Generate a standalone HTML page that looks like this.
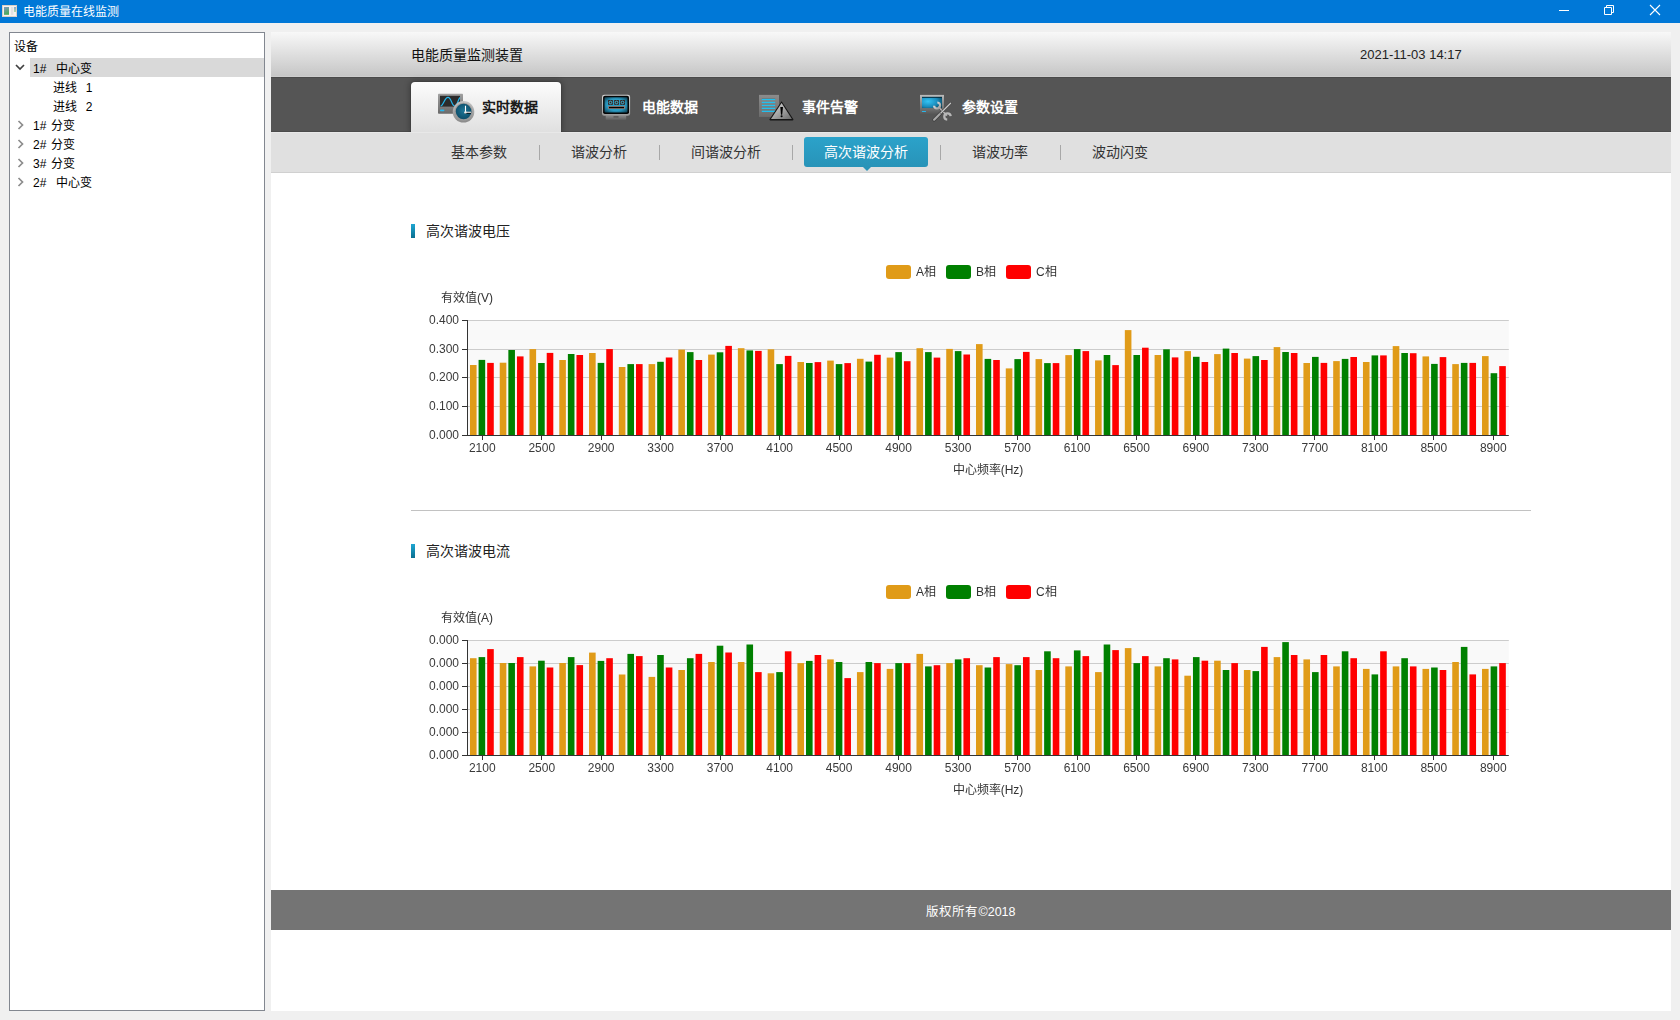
<!DOCTYPE html>
<html lang="zh-CN">
<head>
<meta charset="utf-8">
<title>电能质量在线监测</title>
<style>
*{box-sizing:border-box;margin:0;padding:0}
html,body{width:1680px;height:1020px;overflow:hidden}
body{position:relative;background:#f0f0f0;font-family:"Liberation Sans",sans-serif;color:#000}
.abs{position:absolute}
#titlebar{left:0;top:0;width:1680px;height:23px;background:#0078d7;color:#fff}
#titlebar .t{position:absolute;left:23px;top:4px;font-size:12px;line-height:16px;white-space:nowrap}
#tree{left:9px;top:32px;width:256px;height:979px;background:#fff;border:1px solid #828790}
#tree .row{position:absolute;left:0;height:19px;font-size:12px;line-height:19px;white-space:pre}
#content{left:271px;top:32px;width:1400px;height:979px;background:#fff}
#header{left:0;top:0;width:1400px;height:45px;background:linear-gradient(#f8f8f8 0,#c6c6c6 44px,#cdcdcd 44px)}
#nav{left:0;top:45px;width:1400px;height:55px;background:#555;box-shadow:inset 0 1px 0 #4a4a4a,inset 0 -1px 0 #4b4b4b}
#subnav{left:0;top:100px;width:1400px;height:41px;background:#e0e0e0;box-shadow:inset 0 1px 0 #e8e8e8,inset 0 -1px 0 #d0d0d0}
.mtab{position:absolute;top:0;width:150px;height:55px}
.mtab .txt{position:absolute;left:71px;top:20px;font-size:14px;font-weight:bold;line-height:20px;color:#fff;white-space:nowrap}
.mtab.active{top:5px;height:50px;background:linear-gradient(#fcfcfc,#e0e0e0);border-radius:4px 4px 0 0;box-shadow:0 0 1px rgba(0,0,0,.6),0 0 6px 1px rgba(0,0,0,.32)}
.mtab.active .txt{color:#1a1a1a;top:15px}
.mtab svg{position:absolute}
.stab{position:absolute;top:5px;height:30px;font-size:14px;line-height:30px;color:#333;white-space:nowrap;text-align:center}
.stab.active{background:linear-gradient(#2ba2ca,#2893b8);color:#fff;border-radius:3px}
.stab.active:after{content:"";position:absolute;left:50%;margin-left:-4px;bottom:-4px;border-left:5px solid transparent;border-right:5px solid transparent;border-top:5px solid #2893b8}
.sep{position:absolute;top:13px;width:1px;height:15px;background:#a8a8a8}
.sect{position:absolute;font-size:14px;line-height:16px;color:#222;white-space:nowrap}
.bar4{position:absolute;width:4px;height:14px;background:linear-gradient(#1ea6d2,#0b6f90)}
#footer{left:0;top:858px;width:1400px;height:40px;background:#747474;color:#fff;font-size:12.5px;line-height:44px;text-align:center}
svg text{font-family:"Liberation Sans",sans-serif}
.chart{will-change:transform}
</style>
</head>
<body>
<div id="titlebar" class="abs">
  <svg class="abs" style="left:2px;top:5px" width="15" height="12" viewBox="0 0 15 12">
    <defs><linearGradient id="ig" x1="0" y1="0" x2="0.3" y2="1"><stop offset="0" stop-color="#7f98c4"/><stop offset="1" stop-color="#4aaa5a"/></linearGradient>
    <linearGradient id="ig2" x1="0" y1="0" x2="0" y2="1"><stop offset="0" stop-color="#8aa6d0"/><stop offset="1" stop-color="#b0dca8"/></linearGradient></defs>
    <rect x="0" y="0" width="15" height="12" fill="#f4f2f0"/>
    <rect x="0.5" y="0.5" width="14" height="11" fill="none" stroke="#d6c8bc" stroke-width="0.8"/>
    <rect x="2" y="2" width="5" height="7.8" fill="url(#ig)"/>
    <rect x="9" y="2" width="2.3" height="7.8" fill="#e2e2e2"/>
    <rect x="12" y="2" width="2" height="5" fill="url(#ig2)"/>
  </svg>
  <div class="t">电能质量在线监测</div>
  <svg class="abs" style="left:1559px;top:10px" width="11" height="1"><rect width="10" height="1" fill="#fff"/></svg>
  <svg class="abs" style="left:1604px;top:5px" width="11" height="11" viewBox="0 0 11 11">
    <path d="M0.5 2.5h7v7h-7z M2.5 2.5v-2h7v7h-2" fill="none" stroke="#fff" stroke-width="1"/>
  </svg>
  <svg class="abs" style="left:1649px;top:4px" width="12" height="12" viewBox="0 0 12 12">
    <path d="M1 1L11 11M11 1L1 11" stroke="#fff" stroke-width="1.1"/>
  </svg>
</div>

<div id="tree" class="abs">
  <div class="row" style="top:5px;left:4px">设备</div>
  <div class="abs" style="left:20px;top:25px;width:234px;height:19px;background:#d9d9d9"></div>
  <svg class="abs" style="left:5px;top:31px" width="10" height="7" viewBox="0 0 10 7"><path d="M1 1L5 5L9 1" fill="none" stroke="#404040" stroke-width="1.7"/></svg>
  <div class="row" style="top:27px;left:23px">1#<span style="margin-left:9.7px">中心变</span></div>
  <div class="row" style="top:46px;left:43px">进线<span style="margin-left:8.7px">1</span></div>
  <div class="row" style="top:65px;left:43px">进线<span style="margin-left:8.7px">2</span></div>
  <svg class="abs" style="left:6.5px;top:86.5px" width="7" height="10" viewBox="0 0 6 10"><path d="M1 1L5 5L1 9" fill="none" stroke="#8c8c8c" stroke-width="1.7"/></svg>
  <div class="row" style="top:84px;left:23px">1#<span style="margin-left:5px">分变</span></div>
  <svg class="abs" style="left:6.5px;top:105.5px" width="7" height="10" viewBox="0 0 6 10"><path d="M1 1L5 5L1 9" fill="none" stroke="#8c8c8c" stroke-width="1.7"/></svg>
  <div class="row" style="top:103px;left:23px">2#<span style="margin-left:5px">分变</span></div>
  <svg class="abs" style="left:6.5px;top:124.5px" width="7" height="10" viewBox="0 0 6 10"><path d="M1 1L5 5L1 9" fill="none" stroke="#8c8c8c" stroke-width="1.7"/></svg>
  <div class="row" style="top:122px;left:23px">3#<span style="margin-left:5px">分变</span></div>
  <svg class="abs" style="left:6.5px;top:143.5px" width="7" height="10" viewBox="0 0 6 10"><path d="M1 1L5 5L1 9" fill="none" stroke="#8c8c8c" stroke-width="1.7"/></svg>
  <div class="row" style="top:141px;left:23px">2#<span style="margin-left:9.7px">中心变</span></div>
</div>

<div id="content" class="abs">
  <div id="header" class="abs">
    <div class="abs" style="left:140px;top:14px;font-size:14px;line-height:18px;color:#111;white-space:nowrap">电能质量监测装置</div>
    <div class="abs" style="left:1089px;top:15px;font-size:13px;line-height:16px;color:#222;white-space:nowrap">2021-11-03 14:17</div>
  </div>
  <div id="nav" class="abs">
    <!-- tabs -->
    <div class="mtab active" style="left:140px">
      <svg style="left:25px;top:10px" width="40" height="32" viewBox="0 0 40 32">
<defs>
<linearGradient id="m1" x1="0" y1="0" x2="0" y2="1"><stop offset="0" stop-color="#a0a0a0"/><stop offset="1" stop-color="#6a6a6a"/></linearGradient>
<radialGradient id="c1" cx="0.5" cy="0.45" r="0.6"><stop offset="0" stop-color="#1f7798"/><stop offset="1" stop-color="#0b4a66"/></radialGradient>
<linearGradient id="r1" x1="0" y1="0" x2="0" y2="1"><stop offset="0" stop-color="#c4c4c4"/><stop offset="1" stop-color="#8a8a8a"/></linearGradient>
</defs>
<rect x="2" y="1.8" width="25" height="20" rx="0.8" fill="url(#m1)"/>
<rect x="4" y="3.8" width="20" height="10.8" fill="#2b2b2b"/>
<path d="M4.6 14 C7.5 13.5 8.5 5.3 12 5.3 C15.5 5.3 15.5 14 18.8 14 C21.5 14 22 7 24 5.5" fill="none" stroke="#25b8ee" stroke-width="1.2"/>
<rect x="4" y="17.6" width="4.4" height="1.6" rx="0.8" fill="#29b6ea"/>
<circle cx="27.5" cy="19.8" r="10.8" fill="url(#r1)"/>
<circle cx="27.5" cy="19.8" r="9" fill="#9a9a9a"/>
<circle cx="27.6" cy="19.5" r="7.8" fill="url(#c1)"/>
<rect x="28.8" y="20" width="6.2" height="1.6" fill="#000"/>
<path d="M29.5 13.8V20.3H35" fill="none" stroke="#fff" stroke-width="1.1"/>
<circle cx="29.4" cy="20.4" r="1.2" fill="#eee"/>
</svg>
      <div class="txt">实时数据</div>
    </div>
    <div class="mtab" style="left:300px">
      <svg style="left:29px;top:15px" width="40" height="32" viewBox="0 0 40 32">
<defs>
<linearGradient id="m2" x1="0" y1="0" x2="0" y2="1"><stop offset="0" stop-color="#d4d4d4"/><stop offset="1" stop-color="#9a9a9a"/></linearGradient>
<linearGradient id="st2" x1="0" y1="0" x2="0" y2="1"><stop offset="0" stop-color="#8a8a8a"/><stop offset="1" stop-color="#5c5c5c"/></linearGradient>
<radialGradient id="s2" cx="0.5" cy="0.5" r="0.7"><stop offset="0.55" stop-color="#2a9cc4"/><stop offset="1" stop-color="#0c3a4c"/></radialGradient>
</defs>
<path d="M5.7 23.5 H26.2 V27 Q26.2 28 25.2 28 H6.7 Q5.7 28 5.7 27 Z" fill="url(#st2)"/>
<rect x="13.5" y="24.2" width="5" height="1.4" fill="#555"/>
<rect x="2" y="2.7" width="28.1" height="21" rx="2.2" fill="url(#m2)"/>
<rect x="3.1" y="3.8" width="25.9" height="18.3" rx="1.8" fill="#050505"/>
<rect x="4.5" y="5.3" width="23" height="15.1" rx="0.8" fill="url(#s2)"/>
<rect x="8.1" y="8.1" width="4.7" height="4.7" fill="#3a1e18"/>
<rect x="14.2" y="8.1" width="4.7" height="4.7" fill="#3a1e18"/>
<rect x="20.2" y="8.1" width="4.7" height="4.7" fill="#3a1e18"/>
<circle cx="10.45" cy="10.45" r="1.3" fill="none" stroke="#3cc8f0" stroke-width="0.9"/>
<circle cx="16.55" cy="10.45" r="1.3" fill="none" stroke="#3cc8f0" stroke-width="0.9"/>
<circle cx="22.55" cy="10.45" r="1.3" fill="none" stroke="#3cc8f0" stroke-width="0.9"/>
<rect x="8.1" y="14" width="16.8" height="3" fill="#8a7a76"/>
<rect x="9" y="14.9" width="15" height="1.3" fill="#000"/>
</svg>
      <div class="txt">电能数据</div>
    </div>
    <div class="mtab" style="left:460px">
      <svg style="left:25px;top:15px" width="40" height="32" viewBox="0 0 40 32">
<defs>
<linearGradient id="d3" x1="0" y1="0" x2="0" y2="1"><stop offset="0" stop-color="#8c8c8c"/><stop offset="1" stop-color="#6c6c6c"/></linearGradient>
<linearGradient id="t3" x1="0" y1="0" x2="1" y2="1"><stop offset="0" stop-color="#e0e0e0"/><stop offset="1" stop-color="#6a6a6a"/></linearGradient>
</defs>
<rect x="3" y="2.9" width="20" height="22" fill="url(#d3)"/>
<rect x="5.8" y="6.3" width="13.4" height="1" fill="#7a675e"/>
<rect x="5.8" y="6.8" width="13.4" height="1.3" fill="#20c0f0"/>
<rect x="5.8" y="9.8" width="13.4" height="1.3" fill="#20c0f0"/>
<rect x="5.8" y="12.8" width="13.4" height="1.3" fill="#20c0f0"/>
<rect x="5.8" y="15.7" width="13.4" height="1.3" fill="#20c0f0"/>
<rect x="5.8" y="18.7" width="13.4" height="1.3" fill="#20c0f0"/>
<path d="M25.6 9.2 L37.4 27.3 Q37.8 28.4 36.6 28.4 L14.4 28.4 Q13 28.4 13.5 27.3 Z" fill="#151515"/>
<path d="M25.6 11 L35.9 27.1 L15 27.1 Z" fill="url(#t3)"/>
<path d="M24.3 15 H27 L26.2 22.8 H25 Z" fill="#000"/>
<circle cx="25.6" cy="24.2" r="1.05" fill="#000"/>
</svg>
      <div class="txt">事件告警</div>
    </div>
    <div class="mtab" style="left:620px">
      <svg style="left:26px;top:15px" width="40" height="32" viewBox="0 0 40 32">
<defs>
<linearGradient id="m4" x1="0" y1="0" x2="0" y2="1"><stop offset="0" stop-color="#bcbcbc"/><stop offset="0.3" stop-color="#9a9a9a"/><stop offset="1" stop-color="#565656"/></linearGradient>
<radialGradient id="s4" cx="0.3" cy="0.4" r="0.8"><stop offset="0" stop-color="#34c4f4"/><stop offset="0.6" stop-color="#1a8cbc"/><stop offset="1" stop-color="#08465e"/></radialGradient>
<linearGradient id="k4" x1="0" y1="0" x2="1" y2="1"><stop offset="0" stop-color="#eeeeee"/><stop offset="1" stop-color="#9a9a9a"/></linearGradient>
</defs>
<rect x="3" y="2.9" width="24" height="19.2" fill="url(#m4)"/>
<rect x="5" y="4.9" width="20" height="11.2" fill="url(#s4)"/>
<rect x="5" y="4.9" width="20" height="0.9" fill="#062a3a"/>
<rect x="4.8" y="18.9" width="4.3" height="1.2" rx="0.6" fill="#29b6ea"/>
<path d="M21.2 14.8 L30 23.6" stroke="#444" stroke-width="2.6"/>
<path d="M21.2 14.8 L30 23.6" stroke="#b4b4b4" stroke-width="1.6"/>
<path d="M20.36 10.51 A3 3 0 1 1 17.11 13.76" fill="none" stroke="url(#k4)" stroke-width="2.2"/>
<path d="M30.22 27.69 A3.2 3.2 0 1 1 33.69 24.22" fill="none" stroke="#b8b8b8" stroke-width="2.3"/>
<path d="M17.1 27.7 L23.8 21" stroke="#3a3a3a" stroke-width="3.4" stroke-linecap="round"/>
<path d="M17.1 27.7 L23.8 21" stroke="#a8a8a8" stroke-width="2.2" stroke-linecap="round"/>
<path d="M23.8 21 L33.6 11.2" stroke="#3a3a3a" stroke-width="2.2" stroke-linecap="round"/>
<path d="M23.8 21 L33.6 11.2" stroke="#c8c8c8" stroke-width="1.3" stroke-linecap="round"/>
</svg>
      <div class="txt">参数设置</div>
    </div>
  </div>
  <div id="subnav" class="abs">
    <div class="stab" style="left:160px;width:96px">基本参数</div>
    <div class="sep" style="left:268px"></div>
    <div class="stab" style="left:280px;width:96px">谐波分析</div>
    <div class="sep" style="left:388px"></div>
    <div class="stab" style="left:400px;width:110px">间谐波分析</div>
    <div class="sep" style="left:521px"></div>
    <div class="stab active" style="left:533px;width:124px">高次谐波分析</div>
    <div class="sep" style="left:669px"></div>
    <div class="stab" style="left:681px;width:96px">谐波功率</div>
    <div class="sep" style="left:789px"></div>
    <div class="stab" style="left:801px;width:96px">波动闪变</div>
  </div>
  <div id="footer" class="abs">版权所有©2018</div>
</div>

<!-- section 1 -->
<div class="bar4" style="left:411px;top:224px"></div>
<div class="sect" style="left:426px;top:223px">高次谐波电压</div>
<svg class="abs chart" style="left:411px;top:250px" width="1120" height="240" viewBox="411 250 1120 240">
<rect x="467.5" y="320" width="1041.3" height="115" fill="#f9f9f9"/>
<line x1="467.5" x2="1508.8" y1="320.5" y2="320.5" stroke="#ccc" stroke-width="1"/>
<line x1="467.5" x2="1508.8" y1="349.5" y2="349.5" stroke="#ccc" stroke-width="1"/>
<line x1="467.5" x2="1508.8" y1="377.5" y2="377.5" stroke="#ccc" stroke-width="1"/>
<line x1="467.5" x2="1508.8" y1="406.5" y2="406.5" stroke="#ccc" stroke-width="1"/>
<rect x="469.98" y="365.00" width="6.6" height="70.50" fill="#e09b18"/>
<rect x="478.58" y="359.90" width="6.6" height="75.60" fill="#008000"/>
<rect x="487.18" y="362.90" width="6.6" height="72.60" fill="#ff0000"/>
<rect x="499.75" y="362.70" width="6.6" height="72.80" fill="#e09b18"/>
<rect x="508.35" y="350.00" width="6.6" height="85.50" fill="#008000"/>
<rect x="516.95" y="356.40" width="6.6" height="79.10" fill="#ff0000"/>
<rect x="529.51" y="349.10" width="6.6" height="86.40" fill="#e09b18"/>
<rect x="538.11" y="363.00" width="6.6" height="72.50" fill="#008000"/>
<rect x="546.71" y="352.90" width="6.6" height="82.60" fill="#ff0000"/>
<rect x="559.28" y="360.00" width="6.6" height="75.50" fill="#e09b18"/>
<rect x="567.88" y="354.00" width="6.6" height="81.50" fill="#008000"/>
<rect x="576.48" y="355.00" width="6.6" height="80.50" fill="#ff0000"/>
<rect x="589.05" y="353.00" width="6.6" height="82.50" fill="#e09b18"/>
<rect x="597.65" y="362.90" width="6.6" height="72.60" fill="#008000"/>
<rect x="606.25" y="349.10" width="6.6" height="86.40" fill="#ff0000"/>
<rect x="618.81" y="367.00" width="6.6" height="68.50" fill="#e09b18"/>
<rect x="627.41" y="364.10" width="6.6" height="71.40" fill="#008000"/>
<rect x="636.01" y="364.10" width="6.6" height="71.40" fill="#ff0000"/>
<rect x="648.58" y="364.10" width="6.6" height="71.40" fill="#e09b18"/>
<rect x="657.18" y="361.80" width="6.6" height="73.70" fill="#008000"/>
<rect x="665.78" y="357.50" width="6.6" height="78.00" fill="#ff0000"/>
<rect x="678.34" y="349.60" width="6.6" height="85.90" fill="#e09b18"/>
<rect x="686.94" y="352.10" width="6.6" height="83.40" fill="#008000"/>
<rect x="695.54" y="360.00" width="6.6" height="75.50" fill="#ff0000"/>
<rect x="708.11" y="354.60" width="6.6" height="80.90" fill="#e09b18"/>
<rect x="716.71" y="352.30" width="6.6" height="83.20" fill="#008000"/>
<rect x="725.31" y="345.90" width="6.6" height="89.60" fill="#ff0000"/>
<rect x="737.87" y="348.20" width="6.6" height="87.30" fill="#e09b18"/>
<rect x="746.47" y="350.40" width="6.6" height="85.10" fill="#008000"/>
<rect x="755.07" y="350.90" width="6.6" height="84.60" fill="#ff0000"/>
<rect x="767.64" y="349.30" width="6.6" height="86.20" fill="#e09b18"/>
<rect x="776.24" y="364.10" width="6.6" height="71.40" fill="#008000"/>
<rect x="784.84" y="355.90" width="6.6" height="79.60" fill="#ff0000"/>
<rect x="797.41" y="362.00" width="6.6" height="73.50" fill="#e09b18"/>
<rect x="806.01" y="363.00" width="6.6" height="72.50" fill="#008000"/>
<rect x="814.61" y="362.10" width="6.6" height="73.40" fill="#ff0000"/>
<rect x="827.17" y="360.60" width="6.6" height="74.90" fill="#e09b18"/>
<rect x="835.77" y="364.10" width="6.6" height="71.40" fill="#008000"/>
<rect x="844.37" y="363.10" width="6.6" height="72.40" fill="#ff0000"/>
<rect x="856.94" y="358.80" width="6.6" height="76.70" fill="#e09b18"/>
<rect x="865.54" y="361.60" width="6.6" height="73.90" fill="#008000"/>
<rect x="874.14" y="354.80" width="6.6" height="80.70" fill="#ff0000"/>
<rect x="886.70" y="357.60" width="6.6" height="77.90" fill="#e09b18"/>
<rect x="895.30" y="352.10" width="6.6" height="83.40" fill="#008000"/>
<rect x="903.90" y="361.20" width="6.6" height="74.30" fill="#ff0000"/>
<rect x="916.47" y="348.20" width="6.6" height="87.30" fill="#e09b18"/>
<rect x="925.07" y="352.10" width="6.6" height="83.40" fill="#008000"/>
<rect x="933.67" y="357.60" width="6.6" height="77.90" fill="#ff0000"/>
<rect x="946.23" y="348.90" width="6.6" height="86.60" fill="#e09b18"/>
<rect x="954.83" y="351.10" width="6.6" height="84.40" fill="#008000"/>
<rect x="963.43" y="354.50" width="6.6" height="81.00" fill="#ff0000"/>
<rect x="976.00" y="344.10" width="6.6" height="91.40" fill="#e09b18"/>
<rect x="984.60" y="358.90" width="6.6" height="76.60" fill="#008000"/>
<rect x="993.20" y="360.00" width="6.6" height="75.50" fill="#ff0000"/>
<rect x="1005.77" y="368.40" width="6.6" height="67.10" fill="#e09b18"/>
<rect x="1014.37" y="359.10" width="6.6" height="76.40" fill="#008000"/>
<rect x="1022.97" y="351.90" width="6.6" height="83.60" fill="#ff0000"/>
<rect x="1035.53" y="359.10" width="6.6" height="76.40" fill="#e09b18"/>
<rect x="1044.13" y="363.10" width="6.6" height="72.40" fill="#008000"/>
<rect x="1052.73" y="363.10" width="6.6" height="72.40" fill="#ff0000"/>
<rect x="1065.30" y="355.10" width="6.6" height="80.40" fill="#e09b18"/>
<rect x="1073.90" y="349.10" width="6.6" height="86.40" fill="#008000"/>
<rect x="1082.50" y="351.10" width="6.6" height="84.40" fill="#ff0000"/>
<rect x="1095.06" y="360.40" width="6.6" height="75.10" fill="#e09b18"/>
<rect x="1103.66" y="355.00" width="6.6" height="80.50" fill="#008000"/>
<rect x="1112.26" y="365.10" width="6.6" height="70.40" fill="#ff0000"/>
<rect x="1124.83" y="330.10" width="6.6" height="105.40" fill="#e09b18"/>
<rect x="1133.43" y="355.00" width="6.6" height="80.50" fill="#008000"/>
<rect x="1142.03" y="347.70" width="6.6" height="87.80" fill="#ff0000"/>
<rect x="1154.59" y="355.00" width="6.6" height="80.50" fill="#e09b18"/>
<rect x="1163.19" y="349.30" width="6.6" height="86.20" fill="#008000"/>
<rect x="1171.79" y="357.40" width="6.6" height="78.10" fill="#ff0000"/>
<rect x="1184.36" y="351.10" width="6.6" height="84.40" fill="#e09b18"/>
<rect x="1192.96" y="356.80" width="6.6" height="78.70" fill="#008000"/>
<rect x="1201.56" y="362.00" width="6.6" height="73.50" fill="#ff0000"/>
<rect x="1214.13" y="354.10" width="6.6" height="81.40" fill="#e09b18"/>
<rect x="1222.73" y="348.60" width="6.6" height="86.90" fill="#008000"/>
<rect x="1231.33" y="353.00" width="6.6" height="82.50" fill="#ff0000"/>
<rect x="1243.89" y="358.60" width="6.6" height="76.90" fill="#e09b18"/>
<rect x="1252.49" y="356.10" width="6.6" height="79.40" fill="#008000"/>
<rect x="1261.09" y="360.00" width="6.6" height="75.50" fill="#ff0000"/>
<rect x="1273.66" y="347.10" width="6.6" height="88.40" fill="#e09b18"/>
<rect x="1282.26" y="352.00" width="6.6" height="83.50" fill="#008000"/>
<rect x="1290.86" y="353.00" width="6.6" height="82.50" fill="#ff0000"/>
<rect x="1303.42" y="363.00" width="6.6" height="72.50" fill="#e09b18"/>
<rect x="1312.02" y="356.90" width="6.6" height="78.60" fill="#008000"/>
<rect x="1320.62" y="362.90" width="6.6" height="72.60" fill="#ff0000"/>
<rect x="1333.19" y="361.10" width="6.6" height="74.40" fill="#e09b18"/>
<rect x="1341.79" y="358.90" width="6.6" height="76.60" fill="#008000"/>
<rect x="1350.39" y="357.00" width="6.6" height="78.50" fill="#ff0000"/>
<rect x="1362.95" y="362.00" width="6.6" height="73.50" fill="#e09b18"/>
<rect x="1371.55" y="355.40" width="6.6" height="80.10" fill="#008000"/>
<rect x="1380.15" y="355.40" width="6.6" height="80.10" fill="#ff0000"/>
<rect x="1392.72" y="346.10" width="6.6" height="89.40" fill="#e09b18"/>
<rect x="1401.32" y="353.00" width="6.6" height="82.50" fill="#008000"/>
<rect x="1409.92" y="353.20" width="6.6" height="82.30" fill="#ff0000"/>
<rect x="1422.49" y="356.40" width="6.6" height="79.10" fill="#e09b18"/>
<rect x="1431.09" y="363.90" width="6.6" height="71.60" fill="#008000"/>
<rect x="1439.69" y="357.10" width="6.6" height="78.40" fill="#ff0000"/>
<rect x="1452.25" y="364.10" width="6.6" height="71.40" fill="#e09b18"/>
<rect x="1460.85" y="362.90" width="6.6" height="72.60" fill="#008000"/>
<rect x="1469.45" y="362.90" width="6.6" height="72.60" fill="#ff0000"/>
<rect x="1482.02" y="356.10" width="6.6" height="79.40" fill="#e09b18"/>
<rect x="1490.62" y="373.20" width="6.6" height="62.30" fill="#008000"/>
<rect x="1499.22" y="366.10" width="6.6" height="69.40" fill="#ff0000"/>
<line x1="467.5" x2="467.5" y1="320" y2="436" stroke="#333" stroke-width="1"/>
<line x1="462" x2="1508.8" y1="435.5" y2="435.5" stroke="#333" stroke-width="1"/>
<line x1="462" x2="467" y1="320.5" y2="320.5" stroke="#333" stroke-width="1"/>
<text x="459" y="323.7" text-anchor="end" font-size="12" fill="#3a3a3a">0.400</text>
<line x1="462" x2="467" y1="349.5" y2="349.5" stroke="#333" stroke-width="1"/>
<text x="459" y="352.7" text-anchor="end" font-size="12" fill="#3a3a3a">0.300</text>
<line x1="462" x2="467" y1="377.5" y2="377.5" stroke="#333" stroke-width="1"/>
<text x="459" y="380.7" text-anchor="end" font-size="12" fill="#3a3a3a">0.200</text>
<line x1="462" x2="467" y1="406.5" y2="406.5" stroke="#333" stroke-width="1"/>
<text x="459" y="409.7" text-anchor="end" font-size="12" fill="#3a3a3a">0.100</text>
<line x1="462" x2="467" y1="435.5" y2="435.5" stroke="#333" stroke-width="1"/>
<text x="459" y="438.7" text-anchor="end" font-size="12" fill="#3a3a3a">0.000</text>
<line x1="482.5" x2="482.5" y1="436" y2="440" stroke="#333" stroke-width="1"/>
<text x="482.3" y="452" text-anchor="middle" font-size="12" fill="#3a3a3a">2100</text>
<line x1="541.5" x2="541.5" y1="436" y2="440" stroke="#333" stroke-width="1"/>
<text x="541.8" y="452" text-anchor="middle" font-size="12" fill="#3a3a3a">2500</text>
<line x1="601.5" x2="601.5" y1="436" y2="440" stroke="#333" stroke-width="1"/>
<text x="601.2" y="452" text-anchor="middle" font-size="12" fill="#3a3a3a">2900</text>
<line x1="660.5" x2="660.5" y1="436" y2="440" stroke="#333" stroke-width="1"/>
<text x="660.7" y="452" text-anchor="middle" font-size="12" fill="#3a3a3a">3300</text>
<line x1="720.5" x2="720.5" y1="436" y2="440" stroke="#333" stroke-width="1"/>
<text x="720.2" y="452" text-anchor="middle" font-size="12" fill="#3a3a3a">3700</text>
<line x1="779.5" x2="779.5" y1="436" y2="440" stroke="#333" stroke-width="1"/>
<text x="779.7" y="452" text-anchor="middle" font-size="12" fill="#3a3a3a">4100</text>
<line x1="839.5" x2="839.5" y1="436" y2="440" stroke="#333" stroke-width="1"/>
<text x="839.1" y="452" text-anchor="middle" font-size="12" fill="#3a3a3a">4500</text>
<line x1="898.5" x2="898.5" y1="436" y2="440" stroke="#333" stroke-width="1"/>
<text x="898.6" y="452" text-anchor="middle" font-size="12" fill="#3a3a3a">4900</text>
<line x1="958.5" x2="958.5" y1="436" y2="440" stroke="#333" stroke-width="1"/>
<text x="958.1" y="452" text-anchor="middle" font-size="12" fill="#3a3a3a">5300</text>
<line x1="1017.5" x2="1017.5" y1="436" y2="440" stroke="#333" stroke-width="1"/>
<text x="1017.5" y="452" text-anchor="middle" font-size="12" fill="#3a3a3a">5700</text>
<line x1="1077.5" x2="1077.5" y1="436" y2="440" stroke="#333" stroke-width="1"/>
<text x="1077.0" y="452" text-anchor="middle" font-size="12" fill="#3a3a3a">6100</text>
<line x1="1136.5" x2="1136.5" y1="436" y2="440" stroke="#333" stroke-width="1"/>
<text x="1136.5" y="452" text-anchor="middle" font-size="12" fill="#3a3a3a">6500</text>
<line x1="1195.5" x2="1195.5" y1="436" y2="440" stroke="#333" stroke-width="1"/>
<text x="1195.9" y="452" text-anchor="middle" font-size="12" fill="#3a3a3a">6900</text>
<line x1="1255.5" x2="1255.5" y1="436" y2="440" stroke="#333" stroke-width="1"/>
<text x="1255.4" y="452" text-anchor="middle" font-size="12" fill="#3a3a3a">7300</text>
<line x1="1314.5" x2="1314.5" y1="436" y2="440" stroke="#333" stroke-width="1"/>
<text x="1314.9" y="452" text-anchor="middle" font-size="12" fill="#3a3a3a">7700</text>
<line x1="1374.5" x2="1374.5" y1="436" y2="440" stroke="#333" stroke-width="1"/>
<text x="1374.3" y="452" text-anchor="middle" font-size="12" fill="#3a3a3a">8100</text>
<line x1="1433.5" x2="1433.5" y1="436" y2="440" stroke="#333" stroke-width="1"/>
<text x="1433.8" y="452" text-anchor="middle" font-size="12" fill="#3a3a3a">8500</text>
<line x1="1493.5" x2="1493.5" y1="436" y2="440" stroke="#333" stroke-width="1"/>
<text x="1493.3" y="452" text-anchor="middle" font-size="12" fill="#3a3a3a">8900</text>
<text x="467" y="302" text-anchor="middle" font-size="12" fill="#333">有效值(V)</text>
<text x="988" y="474" text-anchor="middle" font-size="12" fill="#333">中心频率(Hz)</text>
<rect x="886" y="265" width="25" height="14" rx="3" fill="#e09b18"/>
<text x="916" y="276" font-size="12" fill="#333">A相</text>
<rect x="946" y="265" width="25" height="14" rx="3" fill="#008000"/>
<text x="976" y="276" font-size="12" fill="#333">B相</text>
<rect x="1006" y="265" width="25" height="14" rx="3" fill="#ff0000"/>
<text x="1036" y="276" font-size="12" fill="#333">C相</text>
</svg>
<div class="abs" style="left:411px;top:510px;width:1120px;height:1px;background:#c2c2c2"></div>
<!-- section 2 -->
<div class="bar4" style="left:411px;top:544px"></div>
<div class="sect" style="left:426px;top:543px">高次谐波电流</div>
<svg class="abs chart" style="left:411px;top:570px" width="1120" height="240" viewBox="411 570 1120 240">
<rect x="467.5" y="640" width="1041.3" height="115" fill="#f9f9f9"/>
<line x1="467.5" x2="1508.8" y1="640.5" y2="640.5" stroke="#ccc" stroke-width="1"/>
<line x1="467.5" x2="1508.8" y1="663.5" y2="663.5" stroke="#ccc" stroke-width="1"/>
<line x1="467.5" x2="1508.8" y1="686.5" y2="686.5" stroke="#ccc" stroke-width="1"/>
<line x1="467.5" x2="1508.8" y1="709.5" y2="709.5" stroke="#ccc" stroke-width="1"/>
<line x1="467.5" x2="1508.8" y1="732.5" y2="732.5" stroke="#ccc" stroke-width="1"/>
<rect x="469.98" y="658.20" width="6.6" height="97.30" fill="#e09b18"/>
<rect x="478.58" y="657.10" width="6.6" height="98.40" fill="#008000"/>
<rect x="487.18" y="649.10" width="6.6" height="106.40" fill="#ff0000"/>
<rect x="499.75" y="663.00" width="6.6" height="92.50" fill="#e09b18"/>
<rect x="508.35" y="663.00" width="6.6" height="92.50" fill="#008000"/>
<rect x="516.95" y="657.10" width="6.6" height="98.40" fill="#ff0000"/>
<rect x="529.51" y="666.40" width="6.6" height="89.10" fill="#e09b18"/>
<rect x="538.11" y="660.70" width="6.6" height="94.80" fill="#008000"/>
<rect x="546.71" y="667.50" width="6.6" height="88.00" fill="#ff0000"/>
<rect x="559.28" y="663.00" width="6.6" height="92.50" fill="#e09b18"/>
<rect x="567.88" y="657.10" width="6.6" height="98.40" fill="#008000"/>
<rect x="576.48" y="665.10" width="6.6" height="90.40" fill="#ff0000"/>
<rect x="589.05" y="652.60" width="6.6" height="102.90" fill="#e09b18"/>
<rect x="597.65" y="660.90" width="6.6" height="94.60" fill="#008000"/>
<rect x="606.25" y="658.20" width="6.6" height="97.30" fill="#ff0000"/>
<rect x="618.81" y="674.50" width="6.6" height="81.00" fill="#e09b18"/>
<rect x="627.41" y="653.90" width="6.6" height="101.60" fill="#008000"/>
<rect x="636.01" y="656.10" width="6.6" height="99.40" fill="#ff0000"/>
<rect x="648.58" y="676.90" width="6.6" height="78.60" fill="#e09b18"/>
<rect x="657.18" y="655.00" width="6.6" height="100.50" fill="#008000"/>
<rect x="665.78" y="667.50" width="6.6" height="88.00" fill="#ff0000"/>
<rect x="678.34" y="670.00" width="6.6" height="85.50" fill="#e09b18"/>
<rect x="686.94" y="658.20" width="6.6" height="97.30" fill="#008000"/>
<rect x="695.54" y="653.90" width="6.6" height="101.60" fill="#ff0000"/>
<rect x="708.11" y="662.00" width="6.6" height="93.50" fill="#e09b18"/>
<rect x="716.71" y="645.70" width="6.6" height="109.80" fill="#008000"/>
<rect x="725.31" y="652.50" width="6.6" height="103.00" fill="#ff0000"/>
<rect x="737.87" y="662.00" width="6.6" height="93.50" fill="#e09b18"/>
<rect x="746.47" y="644.50" width="6.6" height="111.00" fill="#008000"/>
<rect x="755.07" y="672.10" width="6.6" height="83.40" fill="#ff0000"/>
<rect x="767.64" y="673.30" width="6.6" height="82.20" fill="#e09b18"/>
<rect x="776.24" y="672.10" width="6.6" height="83.40" fill="#008000"/>
<rect x="784.84" y="651.30" width="6.6" height="104.20" fill="#ff0000"/>
<rect x="797.41" y="663.10" width="6.6" height="92.40" fill="#e09b18"/>
<rect x="806.01" y="660.90" width="6.6" height="94.60" fill="#008000"/>
<rect x="814.61" y="655.00" width="6.6" height="100.50" fill="#ff0000"/>
<rect x="827.17" y="659.40" width="6.6" height="96.10" fill="#e09b18"/>
<rect x="835.77" y="662.00" width="6.6" height="93.50" fill="#008000"/>
<rect x="844.37" y="678.10" width="6.6" height="77.40" fill="#ff0000"/>
<rect x="856.94" y="672.10" width="6.6" height="83.40" fill="#e09b18"/>
<rect x="865.54" y="662.00" width="6.6" height="93.50" fill="#008000"/>
<rect x="874.14" y="663.10" width="6.6" height="92.40" fill="#ff0000"/>
<rect x="886.70" y="668.90" width="6.6" height="86.60" fill="#e09b18"/>
<rect x="895.30" y="663.10" width="6.6" height="92.40" fill="#008000"/>
<rect x="903.90" y="663.10" width="6.6" height="92.40" fill="#ff0000"/>
<rect x="916.47" y="653.90" width="6.6" height="101.60" fill="#e09b18"/>
<rect x="925.07" y="666.40" width="6.6" height="89.10" fill="#008000"/>
<rect x="933.67" y="665.20" width="6.6" height="90.30" fill="#ff0000"/>
<rect x="946.23" y="663.10" width="6.6" height="92.40" fill="#e09b18"/>
<rect x="954.83" y="659.40" width="6.6" height="96.10" fill="#008000"/>
<rect x="963.43" y="658.20" width="6.6" height="97.30" fill="#ff0000"/>
<rect x="976.00" y="665.20" width="6.6" height="90.30" fill="#e09b18"/>
<rect x="984.60" y="667.50" width="6.6" height="88.00" fill="#008000"/>
<rect x="993.20" y="657.10" width="6.6" height="98.40" fill="#ff0000"/>
<rect x="1005.77" y="664.10" width="6.6" height="91.40" fill="#e09b18"/>
<rect x="1014.37" y="665.20" width="6.6" height="90.30" fill="#008000"/>
<rect x="1022.97" y="657.10" width="6.6" height="98.40" fill="#ff0000"/>
<rect x="1035.53" y="670.00" width="6.6" height="85.50" fill="#e09b18"/>
<rect x="1044.13" y="651.30" width="6.6" height="104.20" fill="#008000"/>
<rect x="1052.73" y="658.20" width="6.6" height="97.30" fill="#ff0000"/>
<rect x="1065.30" y="666.40" width="6.6" height="89.10" fill="#e09b18"/>
<rect x="1073.90" y="650.40" width="6.6" height="105.10" fill="#008000"/>
<rect x="1082.50" y="656.10" width="6.6" height="99.40" fill="#ff0000"/>
<rect x="1095.06" y="672.10" width="6.6" height="83.40" fill="#e09b18"/>
<rect x="1103.66" y="644.50" width="6.6" height="111.00" fill="#008000"/>
<rect x="1112.26" y="650.10" width="6.6" height="105.40" fill="#ff0000"/>
<rect x="1124.83" y="648.10" width="6.6" height="107.40" fill="#e09b18"/>
<rect x="1133.43" y="663.10" width="6.6" height="92.40" fill="#008000"/>
<rect x="1142.03" y="656.10" width="6.6" height="99.40" fill="#ff0000"/>
<rect x="1154.59" y="666.40" width="6.6" height="89.10" fill="#e09b18"/>
<rect x="1163.19" y="658.20" width="6.6" height="97.30" fill="#008000"/>
<rect x="1171.79" y="659.40" width="6.6" height="96.10" fill="#ff0000"/>
<rect x="1184.36" y="675.70" width="6.6" height="79.80" fill="#e09b18"/>
<rect x="1192.96" y="657.10" width="6.6" height="98.40" fill="#008000"/>
<rect x="1201.56" y="660.70" width="6.6" height="94.80" fill="#ff0000"/>
<rect x="1214.13" y="660.70" width="6.6" height="94.80" fill="#e09b18"/>
<rect x="1222.73" y="670.00" width="6.6" height="85.50" fill="#008000"/>
<rect x="1231.33" y="663.10" width="6.6" height="92.40" fill="#ff0000"/>
<rect x="1243.89" y="670.00" width="6.6" height="85.50" fill="#e09b18"/>
<rect x="1252.49" y="671.10" width="6.6" height="84.40" fill="#008000"/>
<rect x="1261.09" y="646.90" width="6.6" height="108.60" fill="#ff0000"/>
<rect x="1273.66" y="657.10" width="6.6" height="98.40" fill="#e09b18"/>
<rect x="1282.26" y="642.10" width="6.6" height="113.40" fill="#008000"/>
<rect x="1290.86" y="655.00" width="6.6" height="100.50" fill="#ff0000"/>
<rect x="1303.42" y="659.40" width="6.6" height="96.10" fill="#e09b18"/>
<rect x="1312.02" y="672.10" width="6.6" height="83.40" fill="#008000"/>
<rect x="1320.62" y="655.00" width="6.6" height="100.50" fill="#ff0000"/>
<rect x="1333.19" y="666.40" width="6.6" height="89.10" fill="#e09b18"/>
<rect x="1341.79" y="651.30" width="6.6" height="104.20" fill="#008000"/>
<rect x="1350.39" y="658.20" width="6.6" height="97.30" fill="#ff0000"/>
<rect x="1362.95" y="668.90" width="6.6" height="86.60" fill="#e09b18"/>
<rect x="1371.55" y="674.40" width="6.6" height="81.10" fill="#008000"/>
<rect x="1380.15" y="651.30" width="6.6" height="104.20" fill="#ff0000"/>
<rect x="1392.72" y="666.40" width="6.6" height="89.10" fill="#e09b18"/>
<rect x="1401.32" y="658.20" width="6.6" height="97.30" fill="#008000"/>
<rect x="1409.92" y="666.40" width="6.6" height="89.10" fill="#ff0000"/>
<rect x="1422.49" y="668.90" width="6.6" height="86.60" fill="#e09b18"/>
<rect x="1431.09" y="667.50" width="6.6" height="88.00" fill="#008000"/>
<rect x="1439.69" y="670.00" width="6.6" height="85.50" fill="#ff0000"/>
<rect x="1452.25" y="662.00" width="6.6" height="93.50" fill="#e09b18"/>
<rect x="1460.85" y="646.90" width="6.6" height="108.60" fill="#008000"/>
<rect x="1469.45" y="674.40" width="6.6" height="81.10" fill="#ff0000"/>
<rect x="1482.02" y="668.90" width="6.6" height="86.60" fill="#e09b18"/>
<rect x="1490.62" y="666.40" width="6.6" height="89.10" fill="#008000"/>
<rect x="1499.22" y="663.10" width="6.6" height="92.40" fill="#ff0000"/>
<line x1="467.5" x2="467.5" y1="640" y2="756" stroke="#333" stroke-width="1"/>
<line x1="462" x2="1508.8" y1="755.5" y2="755.5" stroke="#333" stroke-width="1"/>
<line x1="462" x2="467" y1="640.5" y2="640.5" stroke="#333" stroke-width="1"/>
<text x="459" y="643.7" text-anchor="end" font-size="12" fill="#3a3a3a">0.000</text>
<line x1="462" x2="467" y1="663.5" y2="663.5" stroke="#333" stroke-width="1"/>
<text x="459" y="666.7" text-anchor="end" font-size="12" fill="#3a3a3a">0.000</text>
<line x1="462" x2="467" y1="686.5" y2="686.5" stroke="#333" stroke-width="1"/>
<text x="459" y="689.7" text-anchor="end" font-size="12" fill="#3a3a3a">0.000</text>
<line x1="462" x2="467" y1="709.5" y2="709.5" stroke="#333" stroke-width="1"/>
<text x="459" y="712.7" text-anchor="end" font-size="12" fill="#3a3a3a">0.000</text>
<line x1="462" x2="467" y1="732.5" y2="732.5" stroke="#333" stroke-width="1"/>
<text x="459" y="735.7" text-anchor="end" font-size="12" fill="#3a3a3a">0.000</text>
<line x1="462" x2="467" y1="755.5" y2="755.5" stroke="#333" stroke-width="1"/>
<text x="459" y="758.7" text-anchor="end" font-size="12" fill="#3a3a3a">0.000</text>
<line x1="482.5" x2="482.5" y1="756" y2="760" stroke="#333" stroke-width="1"/>
<text x="482.3" y="772" text-anchor="middle" font-size="12" fill="#3a3a3a">2100</text>
<line x1="541.5" x2="541.5" y1="756" y2="760" stroke="#333" stroke-width="1"/>
<text x="541.8" y="772" text-anchor="middle" font-size="12" fill="#3a3a3a">2500</text>
<line x1="601.5" x2="601.5" y1="756" y2="760" stroke="#333" stroke-width="1"/>
<text x="601.2" y="772" text-anchor="middle" font-size="12" fill="#3a3a3a">2900</text>
<line x1="660.5" x2="660.5" y1="756" y2="760" stroke="#333" stroke-width="1"/>
<text x="660.7" y="772" text-anchor="middle" font-size="12" fill="#3a3a3a">3300</text>
<line x1="720.5" x2="720.5" y1="756" y2="760" stroke="#333" stroke-width="1"/>
<text x="720.2" y="772" text-anchor="middle" font-size="12" fill="#3a3a3a">3700</text>
<line x1="779.5" x2="779.5" y1="756" y2="760" stroke="#333" stroke-width="1"/>
<text x="779.7" y="772" text-anchor="middle" font-size="12" fill="#3a3a3a">4100</text>
<line x1="839.5" x2="839.5" y1="756" y2="760" stroke="#333" stroke-width="1"/>
<text x="839.1" y="772" text-anchor="middle" font-size="12" fill="#3a3a3a">4500</text>
<line x1="898.5" x2="898.5" y1="756" y2="760" stroke="#333" stroke-width="1"/>
<text x="898.6" y="772" text-anchor="middle" font-size="12" fill="#3a3a3a">4900</text>
<line x1="958.5" x2="958.5" y1="756" y2="760" stroke="#333" stroke-width="1"/>
<text x="958.1" y="772" text-anchor="middle" font-size="12" fill="#3a3a3a">5300</text>
<line x1="1017.5" x2="1017.5" y1="756" y2="760" stroke="#333" stroke-width="1"/>
<text x="1017.5" y="772" text-anchor="middle" font-size="12" fill="#3a3a3a">5700</text>
<line x1="1077.5" x2="1077.5" y1="756" y2="760" stroke="#333" stroke-width="1"/>
<text x="1077.0" y="772" text-anchor="middle" font-size="12" fill="#3a3a3a">6100</text>
<line x1="1136.5" x2="1136.5" y1="756" y2="760" stroke="#333" stroke-width="1"/>
<text x="1136.5" y="772" text-anchor="middle" font-size="12" fill="#3a3a3a">6500</text>
<line x1="1195.5" x2="1195.5" y1="756" y2="760" stroke="#333" stroke-width="1"/>
<text x="1195.9" y="772" text-anchor="middle" font-size="12" fill="#3a3a3a">6900</text>
<line x1="1255.5" x2="1255.5" y1="756" y2="760" stroke="#333" stroke-width="1"/>
<text x="1255.4" y="772" text-anchor="middle" font-size="12" fill="#3a3a3a">7300</text>
<line x1="1314.5" x2="1314.5" y1="756" y2="760" stroke="#333" stroke-width="1"/>
<text x="1314.9" y="772" text-anchor="middle" font-size="12" fill="#3a3a3a">7700</text>
<line x1="1374.5" x2="1374.5" y1="756" y2="760" stroke="#333" stroke-width="1"/>
<text x="1374.3" y="772" text-anchor="middle" font-size="12" fill="#3a3a3a">8100</text>
<line x1="1433.5" x2="1433.5" y1="756" y2="760" stroke="#333" stroke-width="1"/>
<text x="1433.8" y="772" text-anchor="middle" font-size="12" fill="#3a3a3a">8500</text>
<line x1="1493.5" x2="1493.5" y1="756" y2="760" stroke="#333" stroke-width="1"/>
<text x="1493.3" y="772" text-anchor="middle" font-size="12" fill="#3a3a3a">8900</text>
<text x="467" y="622" text-anchor="middle" font-size="12" fill="#333">有效值(A)</text>
<text x="988" y="794" text-anchor="middle" font-size="12" fill="#333">中心频率(Hz)</text>
<rect x="886" y="585" width="25" height="14" rx="3" fill="#e09b18"/>
<text x="916" y="596" font-size="12" fill="#333">A相</text>
<rect x="946" y="585" width="25" height="14" rx="3" fill="#008000"/>
<text x="976" y="596" font-size="12" fill="#333">B相</text>
<rect x="1006" y="585" width="25" height="14" rx="3" fill="#ff0000"/>
<text x="1036" y="596" font-size="12" fill="#333">C相</text>
</svg>
</body>
</html>
